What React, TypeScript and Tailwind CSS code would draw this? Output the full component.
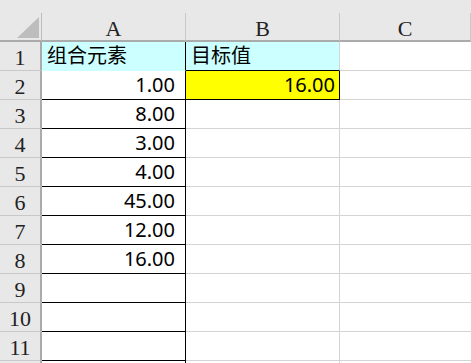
const cols = ['A', 'B', 'C']

const rows: { a?: string; b?: string }[] = [
  { a: '组合元素', b: '目标值' },
  { a: '1.00', b: '16.00' },
  { a: '8.00' },
  { a: '3.00' },
  { a: '4.00' },
  { a: '45.00' },
  { a: '12.00' },
  { a: '16.00' },
  {},
  {},
  {},
  {},
]

const serif = "font-['Liberation_Serif','Times_New_Roman',serif]"
const cellFont = "font-['Noto_Sans','Noto_Sans_CJK_SC',sans-serif]"

export default function App() {
  return (
    <div className="w-[471px] h-[363px] overflow-hidden bg-white">
      <div className="grid grid-cols-[42px_144px_154px_1fr]">
        {/* header strip */}
        <div className="col-span-4 h-[13px] bg-[#e8e8e8]" />
        <div className="h-[29px] bg-[#e8e8e8] border-r border-r-[#bdbdbd] border-b-2 border-b-[#ababab] relative">
          <svg className="absolute left-0 top-0" width="42" height="29">
            <polygon points="39,4 39,25 17,25" fill="#bdbdbd" />
          </svg>
        </div>
        {cols.map(c => (
          <div
            key={c}
            className={`h-[29px] bg-[#e8e8e8] border-r border-r-[#c8c8c8] border-b-2 border-b-[#ababab] flex items-center justify-center pt-[5px] text-[22px] leading-none text-[#222] ${serif}`}
          >
            {c}
          </div>
        ))}

        {rows.map((r, i) => {
          const n = i + 1
          const first = n === 1
          const inA = n <= 11
          return [
            <div
              key={`h${n}`}
              className={`h-[29px] bg-[#e8e8e8] border-r-2 border-r-[#ababab] border-b border-b-[#c8c8c8] flex items-center justify-center pt-[3px] text-[22px] leading-none text-[#222] ${serif}`}
            >
              {n <= 11 ? n : ''}
            </div>,
            <div
              key={`a${n}`}
              className={`h-[29px] flex items-center text-[20px] leading-none text-black whitespace-nowrap ${cellFont} ${
                first
                  ? 'bg-[#ccffff] justify-start pl-[5px] border-r border-r-black border-b border-b-[#ccffff]'
                  : inA
                    ? 'bg-white justify-end pr-[10px] border-r border-r-black border-b border-b-black'
                    : 'bg-white border-r border-r-black border-b border-b-[#d4d4d4]'
              }`}
            >
              {r.a}
            </div>,
            <div
              key={`b${n}`}
              className={`h-[29px] flex items-center text-[20px] leading-none text-black whitespace-nowrap ${cellFont} ${
                first
                  ? 'bg-[#ccffff] justify-start pl-[5px] border-r border-r-[#d4d4d4] border-b border-b-black'
                  : n === 2
                    ? 'bg-[#ffff00] justify-end pr-[4px] border-r border-r-black border-b border-b-black'
                    : 'bg-white border-r border-r-[#d4d4d4] border-b border-b-[#d4d4d4]'
              }`}
            >
              {r.b}
            </div>,
            <div key={`c${n}`} className="h-[29px] bg-white border-b border-b-[#d4d4d4]" />,
          ]
        })}
      </div>
    </div>
  )
}
